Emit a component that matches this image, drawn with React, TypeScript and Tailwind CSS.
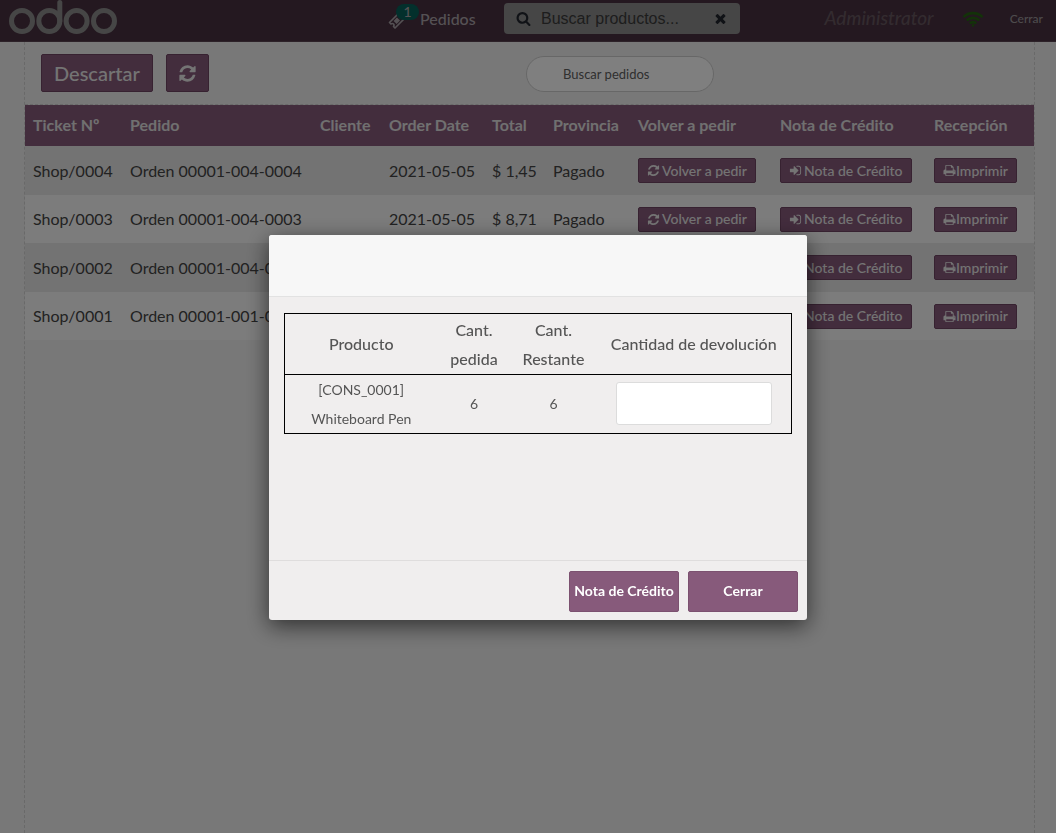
import React from "react";

const paths = {
  refresh:
    "M1639 1056q0 5-1 7-64 268-268 434.5t-478 166.5q-146 0-282.5-55t-243.5-157l-129 129q-19 19-45 19t-45-19-19-45v-448q0-26 19-45t45-19h448q26 0 45 19t19 45-19 45l-137 137q71 66 161 102t187 36q134 0 250-65t186-179q11-17 53-117 8-23 30-23h192q13 0 22.5 9.5t9.5 22.5zm25-800v448q0 26-19 45t-45 19h-448q-26 0-45-19t-19-45 19-45l138-138q-148-137-349-137-134 0-250 65t-186 179q-11 17-53 117-8 23-30 23h-199q-13 0-22.5-9.5t-9.5-22.5v-7q65-268 270-434.5t480-166.5q146 0 284 55.5t245 156.5l130-129q19-19 45-19t45 19 19 45z",
  signIn:
    "M1312 896q0 26-19 45l-544 544q-19 19-45 19t-45-19-19-45v-288h-448q-26 0-45-19t-19-45v-384q0-26 19-45t45-19h448v-288q0-26 19-45t45-19 45 19l544 544q19 19 19 45zm352-352v704q0 119-84.5 203.5t-203.5 84.5h-320q-13 0-22.5-9.5t-9.5-22.5q0-4-1-20t-.5-26.5 3-23.5 10-19.5 20.5-6.5h320q66 0 113-47t47-113v-704q0-66-47-113t-113-47h-312l-11.5-1-11.5-3-8-5.5-7-9-2-13.5q0-4-1-20t-.5-26.5 3-23.5 10-19.5 20.5-6.5h320q119 0 203.5 84.5t84.5 203.5z",
  print:
    "M448 1536h896v-256h-896v256zm0-640h896v-384h-160q-40 0-68-28t-28-68v-160h-640v640zm1152 64q0-26-19-45t-45-19-45 19-19 45 19 45 45 19 45-19 19-45zm128 0v416q0 13-9.5 22.5t-22.5 9.5h-224v160q0 40-28 68t-68 28h-960q-40 0-68-28t-28-68v-160h-224q-13 0-22.5-9.5t-9.5-22.5v-416q0-79 56.5-135.5t135.5-56.5h64v-544q0-40 28-68t68-28h672q40 0 88 20t76 48l152 152q28 28 48 76t20 88v256h64q79 0 135.5 56.5t56.5 135.5z",
  search:
    "M1216 832q0-185-131.5-316.5t-316.5-131.5-316.5 131.5-131.5 316.5 131.5 316.5 316.5 131.5 316.5-131.5 131.5-316.5zm512 832q0 52-38 90t-90 38q-54 0-90-38l-343-342q-179 124-399 124-143 0-273.5-55.5t-225-150-150-225-55.5-273.5 55.5-273.5 150-225 225-150 273.5-55.5 273.5 55.5 225 150 150 225 55.5 273.5q0 220-124 399l343 343q37 37 37 90z",
  times:
    "M1490 1322q0 40-28 68l-136 136q-28 28-68 28t-68-28l-294-294-294 294q-28 28-68 28t-68-28l-136-136q-28-28-28-68t28-68l294-294-294-294q-28-28-28-68t28-68l136-136q28-28 68-28t68 28l294 294 294-294q28-28 68-28t68 28l136 136q28 28 28 68t-28 68l-294 294 294 294q28 28 28 68z",
};

function Icon({ name, className }: { name: keyof typeof paths; className: string }) {
  return (
    <svg viewBox="0 0 1792 1792" fill="currentColor" aria-hidden="true" className={`shrink-0 ${className}`}>
      <path d={paths[name]} />
    </svg>
  );
}

function Ticket() {
  return (
    <svg viewBox="0 0 18 18" aria-hidden="true" className="mt-[3px] size-[18px] shrink-0">
      <path d="M1.500 10.500 10.500 1.500 12 3a1.500 1.500 0 0 0 2.500 2.500L16 7 7 16 5.500 14.500A1.500 1.500 0 0 0 3 12Z" fill="none" stroke="currentColor" strokeWidth="1.700" strokeLinejoin="round" />
      <path d="M8.900 5.600 12 8.600 8.600 12 5.600 8.900Z" fill="currentColor" />
    </svg>
  );
}

function Logo() {
  return (
    <svg viewBox="0 0 110 35" fill="none" stroke="currentColor" strokeWidth="5" role="img" aria-label="odoo" className="h-[35px] w-[110px] text-[#8c8c8c]">
      <circle cx="14" cy="21" r="10.500" />
      <circle cx="41.300" cy="21" r="10.500" />
      <circle cx="68.600" cy="21" r="10.500" />
      <circle cx="96" cy="21" r="10.500" />
      <path d="M51.800 2.500V21" strokeLinecap="round" />
    </svg>
  );
}

function Wifi() {
  return (
    <svg viewBox="0 0 22 16" fill="none" stroke="currentColor" strokeWidth="2.700" role="img" aria-label="Conectado" className="h-4 w-[22px] text-[#266412]">
      <path d="M1.500 6.100a13.400 13.400 0 0 1 19 0" />
      <path d="M4.700 9.400a8.900 8.900 0 0 1 12.600 0" />
      <path d="M7.900 12.500a4.400 4.400 0 0 1 6.200 0" />
      <circle cx="11" cy="14.500" r="1.300" fill="currentColor" stroke="none" />
    </svg>
  );
}

function RowButton({ icon, tight, children }: { icon: keyof typeof paths; tight?: boolean; children: string }) {
  return (
    <button
      type="button"
      className={`flex h-[25px] items-center rounded-xs border border-[#6e4462] bg-[#875a7b] px-2 text-sm font-medium whitespace-nowrap text-[#e8e8e8] ${tight ? "" : "gap-[2px]"}`}
    >
      <Icon name={icon} className="size-[13px]" />
      {children}
    </button>
  );
}

const orders = [
  { ticket: "Shop/0004", order: "Orden 00001-004-0004", date: "2021-05-05", total: "$ 1,45", state: "Pagado" },
  { ticket: "Shop/0003", order: "Orden 00001-004-0003", date: "2021-05-05", total: "$ 8,71", state: "Pagado" },
  { ticket: "Shop/0002", order: "Orden 00001-004-0002", date: "2021-05-05", total: "$ 5,80", state: "Pagado" },
  { ticket: "Shop/0001", order: "Orden 00001-001-0001", date: "2021-05-05", total: "$ 2,90", state: "Pagado" },
];

const headings = ["Ticket Nº", "Pedido", "Cliente", "Order Date", "Total", "Provincia", "Volver a pedir", "Nota de Crédito", "Recepción"];

function TopBar() {
  return (
    <header className="grid h-[42px] grid-cols-[388px_auto_1fr] border-b border-[#5a4453] bg-[#483040]">
      <div className="pl-2">
        <Logo />
      </div>
      <div className="flex items-start">
        <button type="button" className="relative flex h-[38px] w-[116px] items-center text-base font-medium text-[#aaa3a8]">
          <Ticket />
          <span className="ml-[14px]">Pedidos</span>
          <span className="absolute top-1 left-2 flex h-4 w-[23px] items-center justify-center rounded-full bg-[#066059] text-sm leading-4">1</span>
        </button>
        <div className="mt-[3px] flex h-[31px] w-[236px] items-center rounded-[4px] bg-[#8c8c8c] px-3 text-[#20242c]">
          <Icon name="search" className="size-[15px]" />
          <input
            aria-label="Buscar productos"
            placeholder="Buscar productos..."
            className="ml-[10px] min-w-0 flex-1 bg-transparent font-['Liberation_Sans',sans-serif] text-base outline-none placeholder:text-[#3b3b3b]"
          />
          <button type="button" aria-label="Borrar búsqueda">
            <Icon name="times" className="size-[15px]" />
          </button>
        </div>
      </div>
      <div className="flex h-[37px] items-center justify-end pr-[13px]">
        <span className="mr-7 text-[19px] font-medium text-[#66575f] italic">Administrator</span>
        <Wifi />
        <button type="button" className="ml-[26px] text-xs font-medium text-[#9b969a]">
          Cerrar
        </button>
      </div>
    </header>
  );
}

function Orders() {
  return (
    <main className="mr-[21px] ml-6 flex-1 border-x border-dashed border-[#d2d2d2]">
      <div className="grid h-[63px] grid-cols-[501px_188px_1fr] items-center border-b border-dashed border-[#d2d2d2]">
        <div className="flex gap-[13px] pl-4">
          <button type="button" className="h-[38px] rounded-xs border border-[#6e4462] bg-[#875a7b] px-3 text-xl font-medium text-[#e8e8e8]">
            Descartar
          </button>
          <button type="button" aria-label="Actualizar" className="flex h-[38px] w-[43px] items-center justify-center rounded-xs border border-[#6e4462] bg-[#875a7b] text-[#e8e8e8]">
            <Icon name="refresh" className="size-[19px]" />
          </button>
        </div>
        <input
          aria-label="Buscar pedidos"
          placeholder="Buscar pedidos"
          className="mt-[2px] h-9 w-full rounded-full border border-[#cfcfcf] bg-white px-9 text-[13px] outline-none placeholder:text-[#606060]"
        />
      </div>
      <table className="w-full table-fixed text-left text-base">
        <colgroup>
          <col className="w-[97px]" />
          <col className="w-[190px]" />
          <col className="w-[69px]" />
          <col className="w-[103px]" />
          <col className="w-[61px]" />
          <col className="w-[85px]" />
          <col className="w-[142px]" />
          <col className="w-[154px]" />
          <col className="w-[108px]" />
        </colgroup>
        <thead>
          <tr className="h-[41px] bg-[#875a7b] text-[#e0e0e0]">
            {headings.map((h) => (
              <th key={h} scope="col" className="px-2 pb-[2px] font-bold whitespace-nowrap">
                {h}
              </th>
            ))}
          </tr>
        </thead>
        <tbody>
          {orders.map((o) => (
            <tr key={o.ticket} className="whitespace-nowrap text-[#444444] odd:h-[49px] odd:bg-[#e6e6e6] even:h-12 even:bg-[#f8f8f8]">
              <td className="px-2">{o.ticket}</td>
              <td className="px-2">{o.order}</td>
              <td className="px-2" />
              <td className="px-2">{o.date}</td>
              <td className="px-2">{o.total}</td>
              <td className="px-2">{o.state}</td>
              <td className="px-2">
                <RowButton icon="refresh">Volver a pedir</RowButton>
              </td>
              <td className="px-2">
                <RowButton icon="signIn">Nota de Crédito</RowButton>
              </td>
              <td className="px-2">
                <RowButton icon="print" tight>
                  Imprimir
                </RowButton>
              </td>
            </tr>
          ))}
        </tbody>
      </table>
    </main>
  );
}

function ReturnDialog() {
  return (
    <div className="fixed inset-0 flex items-center justify-center bg-black/50 pt-[21px] pl-5">
      <div role="dialog" aria-modal="true" aria-label="Nota de Crédito" className="w-[538px] max-w-full rounded-[3px] bg-[#f0eeee] text-[#555555] shadow-[0_6px_22px_rgba(0,0,0,0.6)]">
        <div className="h-[62px] rounded-t-[3px] border-b border-[#e2e2e2] bg-[#f7f7f7]" />
        <div className="min-h-[263px] px-[15px] pt-4">
          <table className="w-full table-fixed border-collapse border border-black text-center leading-[29px]">
            <colgroup>
              <col className="w-[153px]" />
              <col className="w-[73px]" />
              <col className="w-[86px]" />
              <col />
            </colgroup>
            <thead>
              <tr className="h-[61px] border-b border-black text-base leading-[29px]">
                <th scope="col" className="font-medium">Producto</th>
                <th scope="col" className="font-medium">Cant.<br />pedida</th>
                <th scope="col" className="font-medium">Cant.<br />Restante</th>
                <th scope="col" className="font-medium">Cantidad de devolución</th>
              </tr>
            </thead>
            <tbody>
              <tr className="h-[59px] text-sm leading-[29px]">
                <td>[CONS_0001]<br />Whiteboard Pen</td>
                <td>6</td>
                <td>6</td>
                <td>
                  <input aria-label="Cantidad de devolución" className="mx-auto block h-[43px] w-[156px] rounded-[3px] border border-[#dcdcdc] bg-white px-2 text-center outline-none" />
                </td>
              </tr>
            </tbody>
          </table>
        </div>
        <div className="flex h-[60px] justify-end gap-[9px] border-t border-[#dfdddd] px-[9px] pt-[10px]">
          <button type="button" className="h-[41px] w-[110px] rounded-xs border border-[#7c5170] bg-[#875a7b] text-sm font-bold whitespace-nowrap text-white">
            Nota de Crédito
          </button>
          <button type="button" className="h-[41px] w-[110px] rounded-xs border border-[#7c5170] bg-[#875a7b] text-sm font-bold whitespace-nowrap text-white">
            Cerrar
          </button>
        </div>
      </div>
    </div>
  );
}

export default function App() {
  return (
    <div className="flex min-h-screen flex-col bg-[#f0f0f0] font-['Lato',sans-serif]">
      <TopBar />
      <Orders />
      <ReturnDialog />
    </div>
  );
}
